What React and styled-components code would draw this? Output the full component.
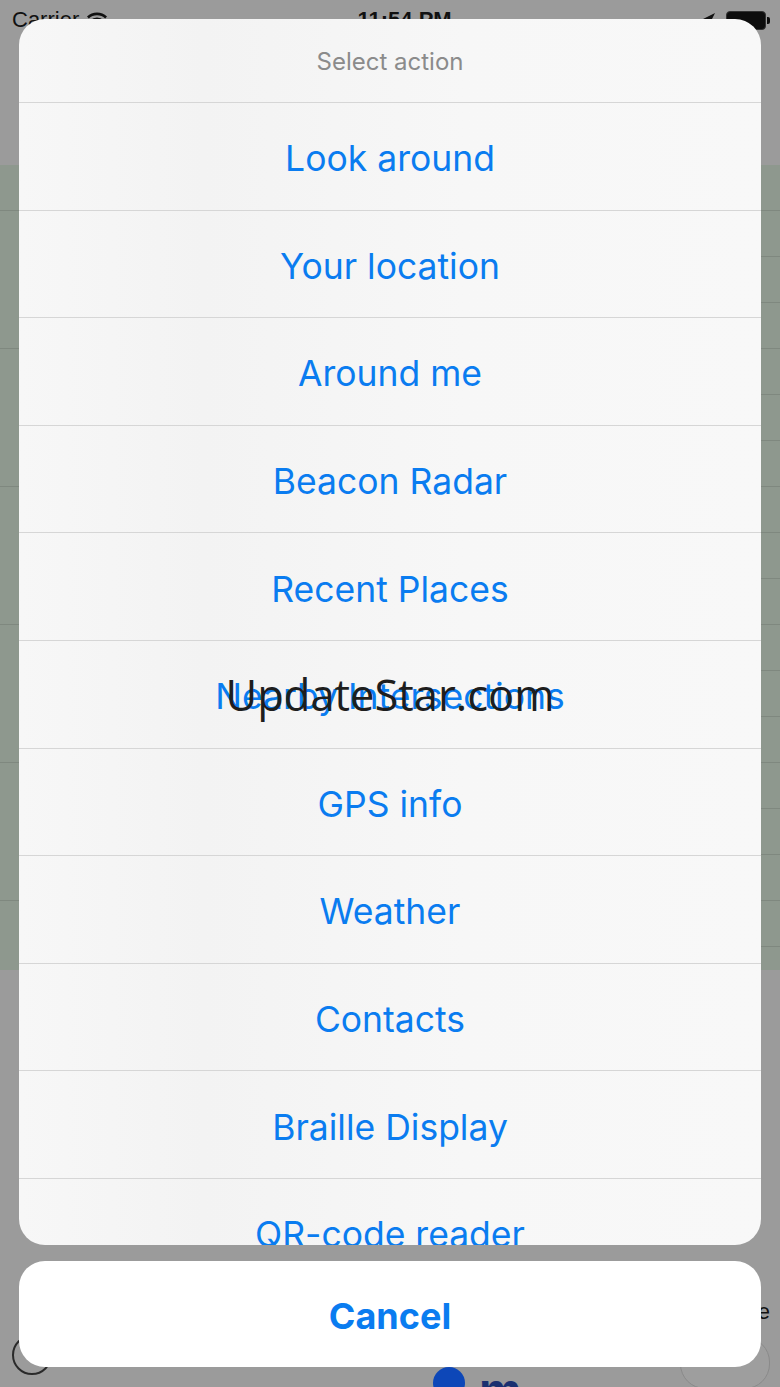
import React from 'react'
import styled, { createGlobalStyle } from 'styled-components'

const GlobalStyle = createGlobalStyle`
  html, body {
    margin: 0;
    padding: 0;
    background: #9b9b9b;
  }
  body {
    font-family: Inter, 'Liberation Sans', sans-serif;
  }
`

const Screen = styled.div`
  position: relative;
  width: 780px;
  height: 1387px;
  overflow: hidden;
  background: #9b9b9b;
  display: flex;
  flex-direction: column;
`

/* app underneath the action sheet (dimmed) */
const StatusBar = styled.div`
  height: 40px;
  display: flex;
  align-items: center;
  justify-content: space-between;
  padding: 0 14px 0 12px;
  font-family: 'Liberation Sans', sans-serif;
  font-size: 22px;
  color: #111;
`
const StatusLeft = styled.div`
  display: flex;
  align-items: center;
  gap: 6px;
`
const StatusTime = styled.div`
  font-weight: 600;
`
const StatusRight = styled.div`
  display: flex;
  align-items: center;
  gap: 10px;
`
const Battery = styled.div`
  position: relative;
  width: 38px;
  height: 17px;
  border-radius: 4px;
  background: #0d0d0d;
  border: 1px solid #333;
  &::after {
    content: '';
    position: absolute;
    right: -5px;
    top: 5px;
    width: 3px;
    height: 7px;
    border-radius: 0 2px 2px 0;
    background: #0d0d0d;
  }
`
const Content = styled.div`
  flex: 1;
  display: flex;
  flex-direction: column;
  padding-top: 125px;
`
const GreenPanel = styled.div`
  height: 805px;
  background: #8e988e;
  display: flex;
  flex-direction: column;
`
const PanelRow = styled.div`
  height: 45px;
  border-bottom: 1px solid #7f887f;
  margin-left: ${(p) => p.indent}px;
`
const BottomBar = styled.div`
  margin-top: auto;
  height: 100px;
  display: flex;
  align-items: flex-end;
  padding: 0 10px 10px 12px;
`
const RoundButton = styled.div`
  width: 36px;
  height: 36px;
  margin-bottom: 2px;
  border-radius: 50%;
  border: 2px solid #2a2a2a;
`
const CenterLabel = styled.div`
  flex: 1;
  display: flex;
  justify-content: center;
  align-items: flex-start;
  gap: 14px;
  height: 22px;
  padding-left: 222px;
  margin-bottom: -12px;
  font-family: 'Liberation Sans', sans-serif;
  font-size: 48px;
  font-weight: 700;
  line-height: 1;
  color: #1a3070;
`
const BlueDot = styled.div`
  width: 32px;
  height: 32px;
  border-radius: 50%;
  background: #0d47b8;
`
const RightGroup = styled.div`
  display: flex;
  flex-direction: column;
  align-items: flex-end;
  gap: 12px;
  font-family: 'Liberation Sans', sans-serif;
  font-size: 22px;
  color: #111;
`
const Toggle = styled.div`
  width: 88px;
  height: 50px;
  margin-bottom: -12px;
  border-radius: 25px;
  border: 1px solid #8a8a8a;
  background: #9e9e9e;
`

/* the action sheet */
const Overlay = styled.div`
  position: absolute;
  inset: 0;
  display: flex;
  flex-direction: column;
  gap: 16px;
  padding: 19px 19px 20px;
`
const Sheet = styled.div`
  flex: 1;
  min-height: 0;
  overflow: hidden;
  border-radius: 26px;
  background: linear-gradient(90deg, #f7f7f7 0%, #f3f3f3 25%, #f7f7f7 60%, #f8f8f8 100%);
  display: flex;
  flex-direction: column;
`
const SheetTitle = styled.div`
  flex: none;
  height: 84px;
  padding-top: 2px;
  display: flex;
  align-items: center;
  justify-content: center;
  font-size: 24px;
  color: #8b8b8b;
  border-bottom: 1px solid #d6d6d6;
  box-sizing: border-box;
`
const Action = styled.div`
  flex: none;
  height: 107.6px;
  padding-top: 5px;
  box-sizing: border-box;
  display: flex;
  align-items: center;
  justify-content: center;
  font-size: 35.5px;
  color: #0a7cf0;
  border-bottom: 1px solid #d6d6d6;
`
const CancelButton = styled.div`
  flex: none;
  height: 106px;
  padding-top: 4px;
  box-sizing: border-box;
  border-radius: 26px;
  background: #ffffff;
  display: flex;
  align-items: center;
  justify-content: center;
  font-size: 36px;
  font-weight: 700;
  color: #0a7cf0;
`
const Watermark = styled.div`
  position: absolute;
  left: 0;
  right: 0;
  top: 665px;
  text-align: center;
  font-family: 'Open Sans', 'Noto Sans', sans-serif;
  font-size: 43.5px;
  color: #1e1e1e;
  pointer-events: none;
`

const actions = [
  'Look around',
  'Your location',
  'Around me',
  'Beacon Radar',
  'Recent Places',
  'Nearby Intersections',
  'GPS info',
  'Weather',
  'Contacts',
  'Braille Display',
  'QR-code reader',
]

const WifiIcon = () => (
  <svg width="24" height="18" viewBox="0 0 24 18">
    <path d="M12 16l3-3.5a4.5 4.5 0 0 0-6 0z" fill="#111" />
    <path d="M5.5 9a9.5 9.5 0 0 1 13 0l-1.8 2a7 7 0 0 0-9.4 0z" fill="#111" />
    <path d="M2 5.5a14.5 14.5 0 0 1 20 0l-1.8 2a12 12 0 0 0-16.4 0z" fill="#111" />
  </svg>
)

const ArrowIcon = () => (
  <svg width="16" height="16" viewBox="0 0 16 16">
    <path d="M15 1L1 8h7v7z" fill="#111" />
  </svg>
)

const App = () => {
  return (
    <Screen>
      <GlobalStyle />
      <StatusBar>
        <StatusLeft>
          Carrier
          <WifiIcon />
        </StatusLeft>
        <StatusTime>11:54 PM</StatusTime>
        <StatusRight>
          <ArrowIcon />
          <Battery />
        </StatusRight>
      </StatusBar>
      <Content>
        <GreenPanel>
          {Array.from({ length: 17 }).map((_, i) => (
            <PanelRow key={i} indent={i % 3 === 0 ? 0 : 760} />
          ))}
        </GreenPanel>
        <BottomBar>
          <RoundButton />
          <CenterLabel>
            <BlueDot />
            m
          </CenterLabel>
          <RightGroup>
            Scale
            <Toggle />
          </RightGroup>
        </BottomBar>
      </Content>

      <Overlay>
        <Sheet>
          <SheetTitle>Select action</SheetTitle>
          {actions.map((a) => (
            <Action key={a}>{a}</Action>
          ))}
        </Sheet>
        <CancelButton>Cancel</CancelButton>
      </Overlay>
      <Watermark>UpdateStar.com</Watermark>
    </Screen>
  )
}

export default App
